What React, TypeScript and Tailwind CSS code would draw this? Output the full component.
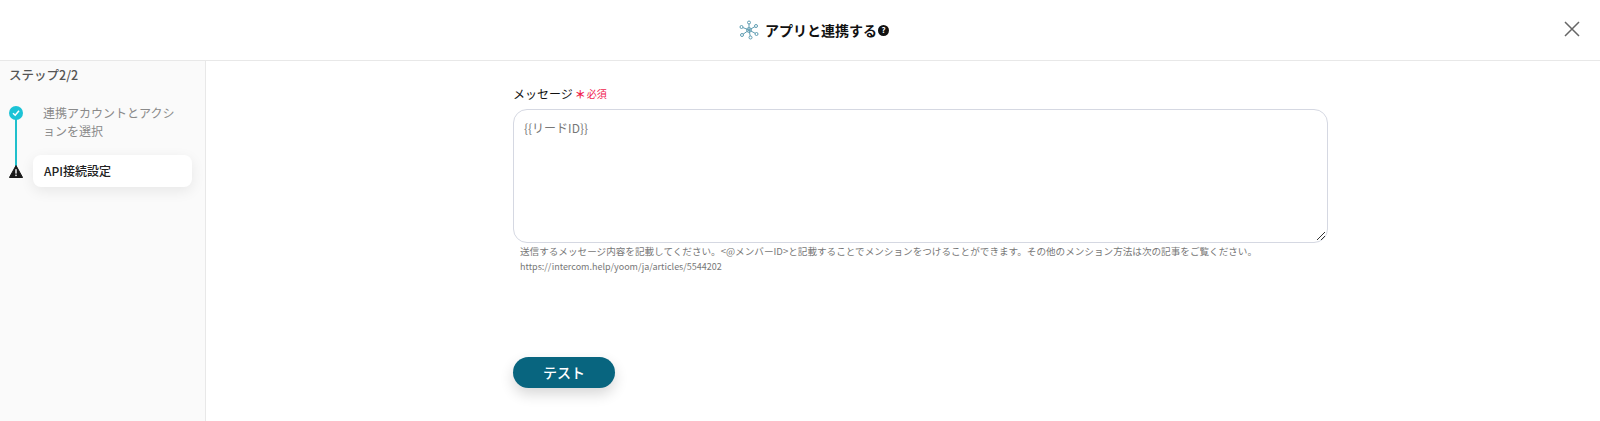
const FONT = "font-['Noto_Sans_CJK_JP','Noto_Sans',sans-serif]";

function NetworkIcon() {
  const ends = [
    [10, 2.5],
    [17, 6],
    [17.5, 14],
    [11.5, 17.5],
    [3, 15],
    [2.5, 7],
  ];
  return (
    <svg width="20" height="20" viewBox="0 0 20 20" fill="none" stroke="#5f9db2" strokeWidth="1">
      <circle cx="10" cy="10" r="2.4" />
      {ends.map(([x, y], i) => (
        <g key={i}>
          <line x1="10" y1="10" x2={x} y2={y} />
          <circle cx={x} cy={y} r="1.5" fill="#fff" />
        </g>
      ))}
    </svg>
  );
}

function Sidebar() {
  return (
    <aside className="w-[206px] shrink-0 border-r border-[#e8e8e8] bg-[#fafafa] pl-[9px] pr-[13px] pt-[5px]">
      <h2 className="text-[12.5px] leading-[18px] font-medium text-[#555]">ステップ2/2</h2>
      <div className="relative mt-[20px]">
        <div className="absolute left-[6px] top-[10px] h-[55px] w-[2px] bg-[#1fc0cc]" />
        <div className="flex">
          <div className="z-10 mt-[2px] flex h-[14px] w-[14px] shrink-0 items-center justify-center rounded-full bg-[#1cc3d6]">
            <svg width="8" height="8" viewBox="0 0 8 8" fill="none" stroke="#fff" strokeWidth="1.5">
              <path d="M1 4.2 L3.2 6.2 L7 1.8" />
            </svg>
          </div>
          <p className="ml-[20px] w-[140px] text-[12px] leading-[18px] text-[#8a8a8a]">
            連携アカウントとアクションを選択
          </p>
        </div>
        <div className="mt-[15px] flex items-center">
          <svg className="z-10 shrink-0" width="14" height="13" viewBox="0 0 14 13">
            <path d="M7 0.5 L13.6 12.5 L0.4 12.5 Z" fill="#1a1a1a" stroke="#1a1a1a" strokeLinejoin="round" />
            <rect x="6.3" y="4.2" width="1.4" height="4.4" fill="#fff" />
            <rect x="6.3" y="9.6" width="1.4" height="1.5" fill="#fff" />
          </svg>
          <div className="ml-[10px] flex h-[32px] flex-1 items-center rounded-[8px] bg-white pl-[11px] text-[12px] font-medium text-[#222] shadow-[0_4px_14px_rgba(0,0,0,0.08)]">
            API接続設定
          </div>
        </div>
      </div>
    </aside>
  );
}

export default function App() {
  return (
    <div className={`flex h-[421px] w-[1600px] flex-col overflow-hidden bg-white ${FONT}`}>
      <header className="relative flex h-[61px] shrink-0 items-center justify-center border-b border-[#e8e8e8] pl-[28px]">
        <NetworkIcon />
        <span className="ml-[6px] text-[14px] font-bold text-[#111]">アプリと連携する</span>
        <span className="ml-[1px] flex h-[11px] w-[11px] items-center justify-center rounded-full bg-[#111] text-[8px] leading-none font-bold text-white">
          ?
        </span>
        <svg
          className="absolute right-[20px] top-[21px]"
          width="16"
          height="16"
          viewBox="0 0 16 16"
          stroke="#666"
          strokeWidth="1.5"
        >
          <path d="M1 1 L15 15 M15 1 L1 15" />
        </svg>
      </header>
      <div className="flex flex-1">
        <Sidebar />
        <main className="flex-1 pl-[307px] pt-[24px]">
          <div className="w-[815px]">
            <div className="flex items-center">
              <span className="text-[12px] leading-[18px] text-[#111]">メッセージ</span>
              <span className="ml-[2px] text-[11px] leading-[18px] font-bold text-[#f0244f]">＊</span>
              <span className="ml-[1px] text-[10px] leading-[18px] text-[#f0244f]">必須</span>
            </div>
            <div className="relative mt-[6px]">
              <textarea
                readOnly
                defaultValue="{{リードID}}"
                className="block h-[134px] w-full resize-none rounded-[14px] border border-[#d5d8e2] bg-white px-[10px] py-[9px] text-[12px] leading-[18px] text-[#777] outline-none"
              />
              <svg
                className="absolute bottom-[2px] right-[2px]"
                width="10"
                height="10"
                viewBox="0 0 10 10"
                stroke="#333"
                strokeWidth="1"
              >
                <path d="M1 9 L9 1 M5 9 L9 5" />
              </svg>
            </div>
            <div className="px-[7px] text-[9.6px] leading-[16px] text-[#777]">
              <p>
                送信するメッセージ内容を記載してください。&lt;@メンバーID&gt;と記載することでメンションをつけることができます。その他のメンション方法は次の記事をご覧ください。
              </p>
              <p className="text-[9px]">https://intercom.help/yoom/ja/articles/5544202</p>
            </div>
            <button className="mt-[82px] h-[31px] w-[102px] rounded-full bg-[#08657f] text-[14px] font-medium text-white shadow-[0_6px_14px_rgba(0,0,0,0.16)]">
              テスト
            </button>
          </div>
        </main>
      </div>
    </div>
  );
}
